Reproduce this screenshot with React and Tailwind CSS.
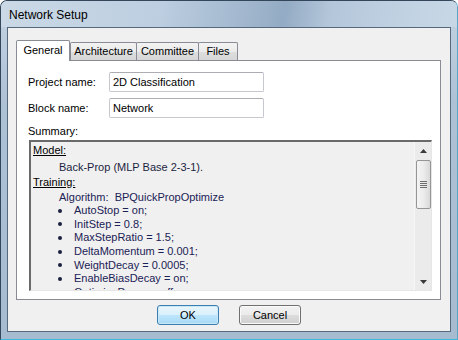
import React from "react";

const font = { fontFamily: '"Liberation Sans", Arial, sans-serif' };

function Tab({ label, selected, w }) {
  if (selected) {
    return (
      <div
        className={`relative z-10 -mb-px h-[21px] ${w} border border-b-0 border-[#898c95] bg-white flex items-start justify-center pt-[3px] rounded-t-[2px]`}
      >
        <span className="text-[11px] leading-[13px] text-black">{label}</span>
      </div>
    );
  }
  return (
    <div
      className={`h-[18px] ${w} -ml-px border border-b-0 border-[#898c95] bg-[linear-gradient(180deg,#f3f3f3_0%,#ebebeb_50%,#dedede_51%,#d6d6d6_100%)] flex items-center justify-center rounded-t-[2px]`}
    >
      <span className="text-[11px] leading-[13px] text-black">{label}</span>
    </div>
  );
}

function Bullet({ children }) {
  return (
    <div className="flex h-[13.6px] shrink-0 items-center">
      <span className="w-[16px] pl-[25px] box-content flex items-center">
        <span className="inline-block w-[4px] h-[4px] rounded-full bg-[#1b2040]" />
      </span>
      <span className="text-[11px] leading-[13px] text-[#1b2255] whitespace-nowrap">{children}</span>
    </div>
  );
}

export default function App() {
  return (
    <div
      style={font}
      className="w-[458px] h-[340px] flex flex-col rounded-t-[7px] border border-[#34465a] border-b-[#3fb8dc] border-r-[#5aa6c8] bg-[linear-gradient(180deg,#c3d3e2_0%,#aec2d6_30%,#a6bbd0_100%)] overflow-hidden"
    >
      {/* title bar */}
      <div className="h-[26px] shrink-0 flex items-center pl-[8px] pt-[1px] bg-[linear-gradient(100deg,#cbd9e6_0%,#bccee0_35%,#9fb5cc_55%,#93abc4_62%,#b4c7da_72%,#c2d3e3_90%,#c8d7e5_100%)]">
        <span className="text-[12px] leading-[14px] text-black">Network Setup</span>
      </div>

      {/* client */}
      <div className="mx-[6px] h-[305px] shrink-0 border border-[#55687c] bg-[#f0f0f0] flex flex-col">
        {/* tabs */}
        <div className="pt-[12px] pl-[8px] flex items-end">
          <Tab label="General" selected w="w-[54px]" />
          <div className="w-[1px]" />
          <Tab label="Architecture" w="w-[67px]" />
          <Tab label="Committee" w="w-[63px]" />
          <Tab label="Files" w="w-[40px]" />
        </div>

        {/* panel */}
        <div className="ml-[8px] w-[425px] h-[240px] border border-[#898c95] bg-white pl-[11px] pt-[11px] flex flex-col">
          <div className="flex items-center h-[20px]">
            <span className="w-[81px] text-[11px] leading-[13px] text-black">Project name:</span>
            <div className="w-[155px] h-[20px] border border-[#c5c8cf] border-t-[#abadb3] rounded-[2px] bg-white flex items-center pl-[3px]">
              <span className="text-[11px] leading-[13px] text-black">2D Classification</span>
            </div>
          </div>
          <div className="flex items-center h-[20px] mt-[6px]">
            <span className="w-[81px] text-[11px] leading-[13px] text-black">Block name:</span>
            <div className="w-[155px] h-[20px] border border-[#c5c8cf] border-t-[#abadb3] rounded-[2px] bg-white flex items-center pl-[3px]">
              <span className="text-[11px] leading-[13px] text-black">Network</span>
            </div>
          </div>
          <div className="mt-[6px] h-[14px] flex items-center">
            <span className="text-[11px] leading-[13px] text-black">Summary:</span>
          </div>

          {/* summary box */}
          <div className="mt-[2px] ml-[1px] w-[403px] h-[151px] border-t-2 border-l-2 border-[#6a6a6a] border-r border-b border-r-[#e6e6e6] border-b-[#e6e6e6] bg-[#f0f0f0] flex overflow-hidden">
            <div className="flex-1 pl-[2px] pt-[1px] flex flex-col overflow-hidden">
              <div className="h-[14px] shrink-0 flex items-center">
                <span className="text-[11px] leading-[13px] text-black underline underline-offset-[1px]">Model:</span>
              </div>
              <div className="h-[14px] shrink-0 mt-[3px] flex items-center pl-[26px]">
                <span className="text-[11px] leading-[13px] text-[#1b1f3f]">Back-Prop (MLP Base 2-3-1).</span>
              </div>
              <div className="h-[14px] shrink-0 mt-[1px] flex items-center">
                <span className="text-[11px] leading-[13px] text-black underline underline-offset-[1px]">Training:</span>
              </div>
              <div className="h-[14px] shrink-0 mt-[1px] flex items-center pl-[26px]">
                <span className="text-[11px] leading-[13px] text-[#1b2255] whitespace-pre">Algorithm:  BPQuickPropOptimize</span>
              </div>
              <Bullet>AutoStop = on;</Bullet>
              <Bullet>InitStep = 0.8;</Bullet>
              <Bullet>MaxStepRatio = 1.5;</Bullet>
              <Bullet>DeltaMomentum = 0.001;</Bullet>
              <Bullet>WeightDecay = 0.0005;</Bullet>
              <Bullet>EnableBiasDecay = on;</Bullet>
              <Bullet>OptimizeDecay = off;</Bullet>
            </div>

            {/* scrollbar */}
            <div className="w-[17px] shrink-0 h-full border-l border-[#f7f7f7] bg-[#ebebeb] flex flex-col items-center">
              <div className="h-[17px] flex items-center justify-center">
                <svg width="7" height="4" viewBox="0 0 7 4">
                  <path d="M3.5 0 L7 4 L0 4 Z" fill="#3a3a3a" />
                </svg>
              </div>
              <div className="mt-[1px] w-[15px] h-[49px] rounded-[2px] border border-[#959595] bg-[linear-gradient(90deg,#f4f4f4_0%,#ececec_50%,#d9d9d9_100%)] flex flex-col items-center justify-center gap-[1px]">
                <div className="w-[7px] h-[1px] bg-[#6d6d6d]" />
                <div className="w-[7px] h-[1px] bg-[#6d6d6d]" />
                <div className="w-[7px] h-[1px] bg-[#6d6d6d]" />
                <div className="w-[7px] h-[1px] bg-[#6d6d6d]" />
              </div>
              <div className="flex-1" />
              <div className="h-[17px] flex items-center justify-center">
                <svg width="7" height="4" viewBox="0 0 7 4">
                  <path d="M0 0 L7 0 L3.5 4 Z" fill="#3a3a3a" />
                </svg>
              </div>
            </div>
          </div>
        </div>

        {/* buttons */}
        <div className="mt-[5px] flex justify-center gap-[20px]">
          <div className="w-[62px] h-[20px] rounded-[3px] border border-[#3c7fb1] bg-[linear-gradient(180deg,#eaf6fd_0%,#d9f0fc_50%,#bee6fd_51%,#a7d9f5_100%)] flex items-center justify-center shadow-[inset_0_0_0_1px_#c8e8f8]">
            <span className="text-[11px] leading-[13px] text-black">OK</span>
          </div>
          <div className="w-[62px] h-[20px] rounded-[3px] border border-[#707070] bg-[linear-gradient(180deg,#f2f2f2_0%,#ebebeb_50%,#dddddd_51%,#cfcfcf_100%)] flex items-center justify-center shadow-[inset_0_0_0_1px_#fafafa]">
            <span className="text-[11px] leading-[13px] text-black">Cancel</span>
          </div>
        </div>
      </div>
    </div>
  );
}
